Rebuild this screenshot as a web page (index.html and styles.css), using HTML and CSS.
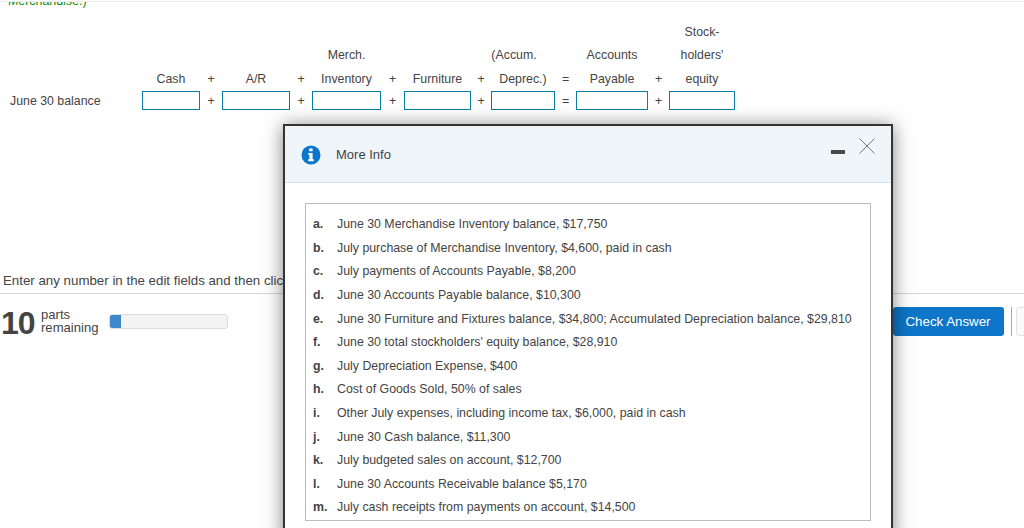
FILE: index.html
```html
<!DOCTYPE html>
<html lang="en">
<head>
<meta charset="utf-8">
<title>More Info</title>
<link rel="stylesheet" href="styles.css">
</head>
<body>
<div class="page">
  <div class="top-clip"><p class="note">Merchandise.)</p></div>
  <div class="grid">
    <div class="cell label"></div><div class="cell"></div><div class="cell"></div><div class="cell"></div><div class="cell"></div><div class="cell"></div><div class="cell"></div><div class="cell"></div><div class="cell"></div><div class="cell"></div><div class="cell"></div><div class="cell"></div><div class="cell"></div><div class="cell">Stock-</div>
    <div class="cell label"></div><div class="cell"></div><div class="cell"></div><div class="cell"></div><div class="cell"></div><div class="cell">Merch.</div><div class="cell"></div><div class="cell"></div><div class="cell"></div><div class="cell accum">(Accum.</div><div class="cell"></div><div class="cell">Accounts</div><div class="cell"></div><div class="cell">holders'</div>
    <div class="cell label"></div><div class="cell">Cash</div><div class="cell">+</div><div class="cell">A/R</div><div class="cell">+</div><div class="cell">Inventory</div><div class="cell">+</div><div class="cell">Furniture</div><div class="cell">+</div><div class="cell">Deprec.)</div><div class="cell">=</div><div class="cell">Payable</div><div class="cell">+</div><div class="cell">equity</div>
    <div class="cell label low">June 30 balance</div><div class="field"></div><div class="cell low">+</div><div class="field"></div><div class="cell low">+</div><div class="field"></div><div class="cell low">+</div><div class="field"></div><div class="cell low">+</div><div class="field"></div><div class="cell low">=</div><div class="field"></div><div class="cell low">+</div><div class="field"></div>
  </div>
  <p class="hint">Enter any number in the edit fields and then click Check Answer.</p>
  <div class="footer">
    <div class="count">10</div>
    <div class="parts">parts<br>remaining</div>
    <div class="progress"><div class="progress-fill"></div></div>
    <button class="check" type="button">Check Answer</button>
    <div class="sep"></div>
    <div class="next"></div>
  </div>
</div>
<section class="modal">
  <header class="modal-head">
    <svg class="info" width="20" height="20" viewBox="0 0 20 20"><circle cx="10" cy="10" r="9.500" fill="#0b76cc"/><path fill="#fff" d="M8.200 3.600h3.400v2.700H8.200zM7.400 8h4.200v6.300h1.200v1.900H7.200v-1.900h1.200V9.900h-1z"/></svg>
    <h2 class="modal-title">More Info</h2>
    <svg class="minimize" width="14" height="4" viewBox="0 0 14 4"><rect width="14" height="4" fill="#4a4a4a"/></svg>
    <svg class="close" width="16" height="16" viewBox="0 0 16 16"><path d="M.5.5l15 15M15.500.5l-15 15" stroke="#555" stroke-width=".8" fill="none"/></svg>
  </header>
  <div class="modal-body">
    <ol class="facts">
      <li><b>a.</b><span>June 30 Merchandise Inventory balance, $17,750</span></li>
      <li><b>b.</b><span>July purchase of Merchandise Inventory, $4,600, paid in cash</span></li>
      <li><b>c.</b><span>July payments of Accounts Payable, $8,200</span></li>
      <li><b>d.</b><span>June 30 Accounts Payable balance, $10,300</span></li>
      <li><b>e.</b><span>June 30 Furniture and Fixtures balance, $34,800; Accumulated Depreciation balance, $29,810</span></li>
      <li><b>f.</b><span>June 30 total stockholders' equity balance, $28,910</span></li>
      <li><b>g.</b><span>July Depreciation Expense, $400</span></li>
      <li><b>h.</b><span>Cost of Goods Sold, 50% of sales</span></li>
      <li><b>i.</b><span>Other July expenses, including income tax, $6,000, paid in cash</span></li>
      <li><b>j.</b><span>June 30 Cash balance, $11,300</span></li>
      <li><b>k.</b><span>July budgeted sales on account, $12,700</span></li>
      <li><b>l.</b><span>June 30 Accounts Receivable balance $5,170</span></li>
      <li><b>m.</b><span>July cash receipts from payments on account, $14,500</span></li>
    </ol>
  </div>
</section>
</body>
</html>
```
FILE: styles.css
```css
* { box-sizing: border-box; }
html, body { margin: 0; height: 528px; overflow: hidden; background: #fff; }
body { font-family: "Liberation Sans", Arial, sans-serif; font-size: 12.35px; color: #444; position: relative; }
.page { width: 1024px; height: 528px; overflow: hidden; }
.top-clip { height: 19px; border-top: 1px solid #ececec; margin-top: 1px; overflow: hidden; }
.note { margin: -8px 0 0 8px; font-size: 12.4px; line-height: 15px; color: #0a8a0a; }
.grid { display: grid; grid-template-columns: 142px 58px 22px 68px 22px 69px 23px 67px 20px 64px 21px 72px 21px 66px; grid-template-rows: repeat(3, 23.5px) 19px; }
.cell { display: flex; align-items: center; justify-content: center; white-space: nowrap; }
.label { justify-content: flex-start; padding-left: 10px; }
.low { padding-top: 2px; }
.accum { padding-right: 18px; }
.field { border: 1.5px solid #0a7ea4; background: #fff; }
.hint { margin: 162px 0 0; padding: 0 0 5px 3px; height: 22px; line-height: 17px; font-size: 13.3px; white-space: nowrap; border-bottom: 1px solid #d3d6e6; }
.footer { display: flex; align-items: flex-start; height: 60px; }
.footer > * { flex: none; }
.count { width: 32px; margin: 13px 0 0 1px; font-size: 32px; font-weight: 700; line-height: 32px; color: #444; letter-spacing: -1px; }
.parts { margin: 14px 0 0 8px; font-size: 13.1px; line-height: 13px; }
.progress { width: 119px; height: 15px; margin: 20px 0 0 10px; background: #f3f3f3; border: 1px solid #ddd; border-radius: 3px; overflow: hidden; }
.progress-fill { width: 11px; height: 100%; background: #3d87cc; }
.check { width: 111px; height: 29px; margin: 13px 0 0 665px; padding: 0; border: 0; border-radius: 3px; background: #0d76c8; color: #fff; font: 13.300px/29px "Liberation Sans", Arial, sans-serif; }
.sep { width: 1px; height: 29px; margin: 13px 0 0 7px; background: #aaa; }
.next { width: 60px; height: 29px; margin: 13px 0 0 4px; border: 1px solid #e2e2e2; border-radius: 3px; background: #fafafa; }
.modal { position: absolute; left: 283px; top: 124px; width: 610px; height: 420px; background: #fff; border: 2px solid #333; box-shadow: 0 2px 18px rgba(0,0,0,.5); }
.modal-head { display: flex; align-items: center; height: 57px; padding: 1px 16px 0; background: #f0f5fa; border-bottom: 1px solid #cfe2f0; }
.info { flex: none; }
.modal-title { margin: 0 0 0 15px; flex: 1; font-size: 13px; font-weight: 400; }
.minimize { margin-top: -6px; }
.close { margin: -17px 0 0 14px; }
.modal-body { padding: 20px 20px 0; }
.facts { list-style: none; width: 566px; height: 318px; margin: 0; padding: 8.5px 0 0 7px; border: 1px solid #bbb; }
.facts li { display: flex; height: 23.6px; align-items: center; white-space: nowrap; }
.facts b { width: 24px; font-weight: 700; }
```
